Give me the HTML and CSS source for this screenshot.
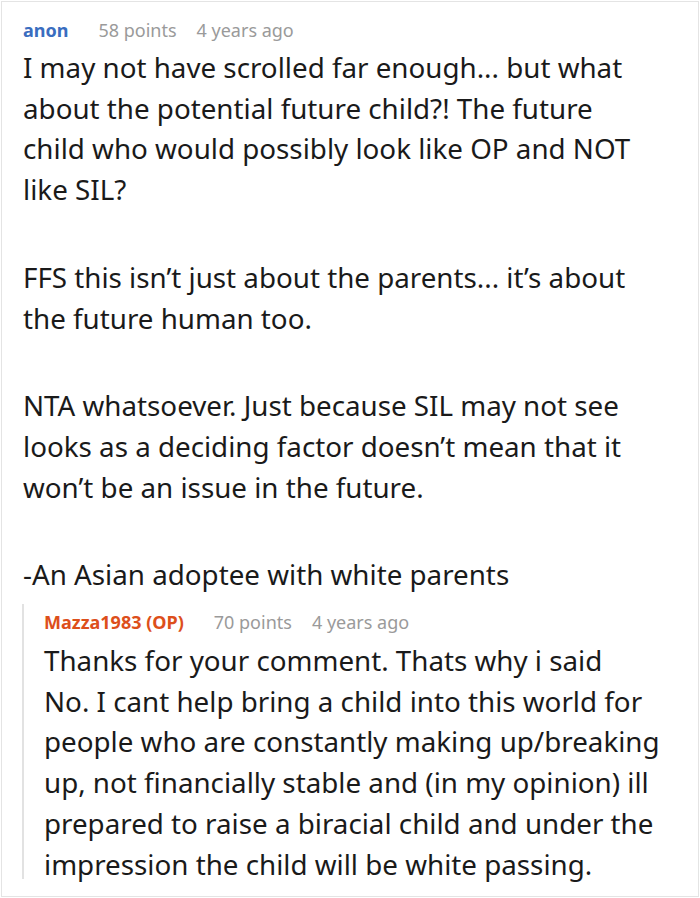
FILE: index.html
```html
<!DOCTYPE html>
<html>
<head>
<meta charset="utf-8">
<link rel="stylesheet" href="styles.css">
</head>
<body>
<div class="card">
  <div class="comment">
    <div class="meta">
      <span class="author">anon</span>
      <span class="points">58 points</span>
      <span class="time">4 years ago</span>
    </div>
    <div class="body">
      <p>I may not have scrolled far enough... but what about the potential future child?! The future child who would possibly look like OP and NOT like SIL?</p>
      <p>FFS this isn’t just about the parents... it’s about the future human too.</p>
      <p>NTA whatsoever. Just because SIL may not see looks as a deciding factor doesn’t mean that it won’t be an issue in the future.</p>
      <p>-An Asian adoptee with white parents</p>
    </div>
  </div>
  <div class="reply">
    <div class="meta">
      <span class="author op">Mazza1983 (OP)</span>
      <span class="points">70 points</span>
      <span class="time">4 years ago</span>
    </div>
    <div class="body">
      <p>Thanks for your comment. Thats why i said<br>No. I cant help bring a child into this world for people who are constantly making up/breaking up, not financially stable and (in my opinion) ill prepared to raise a biracial child and under the impression the child will be white passing.</p>
    </div>
  </div>
</div>
</body>
</html>
```
FILE: styles.css
```css
html, body {
  margin: 0;
  padding: 0;
  background: #ffffff;
}
body {
  padding: 1px;
  font-family: "Noto Sans", "Open Sans", sans-serif;
}
.card {
  box-sizing: border-box;
  width: 698px;
  height: 896px;
  border: 1px solid #e4e4e4;
  background: #fff;
  padding: 14px 41px 0 21px;
  overflow: hidden;
}
.meta {
  display: flex;
  align-items: baseline;
  font-size: 18px;
  line-height: 28px;
  white-space: nowrap;
}
.author {
  font-weight: 700;
  color: #3a6dbf;
  margin-right: 30px;
}
.author.op {
  color: #dd4f1b;
}
.points, .time {
  color: #9a9a9a;
}
.points {
  margin-right: 20px;
}
.body {
  color: #1a1a1a;
  font-size: 27.75px;
  line-height: 40.7px;
  margin-top: 3px;
}
.body p {
  margin: 0 0 47px;
}
.body p:last-child {
  margin-bottom: 0;
}
.reply {
  margin-top: 9px;
  margin-left: -1px;
  margin-right: -12px;
  padding: 4px 0 0 22px;
  background: linear-gradient(#e2e2e2, #e2e2e2) no-repeat left top / 2px calc(100% - 5px);
}
.reply .body {
  margin-top: 4px;
}
```
